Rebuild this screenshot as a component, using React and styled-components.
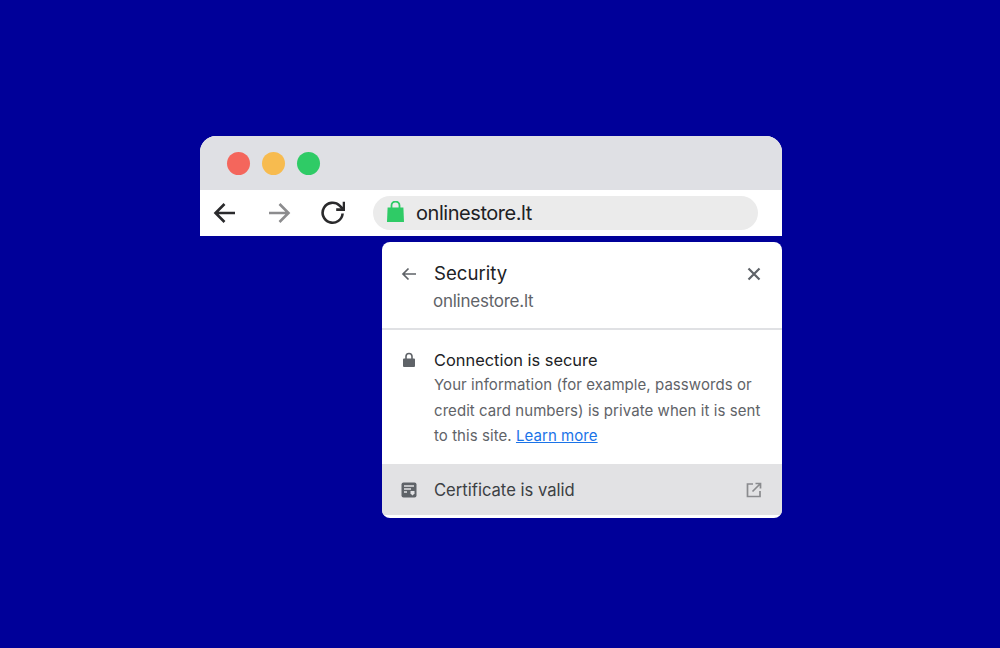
import React from "react";
import styled, { createGlobalStyle } from "styled-components";

const Global = createGlobalStyle`
  html, body { margin: 0; padding: 0; background: #000099; }
  body { font-family: Inter, "Liberation Sans", sans-serif; }
`;
const Page = styled.div`
  width: 1000px; height: 648px; box-sizing: border-box;
  padding: 136px 218px 0 200px; background: #000099; overflow: hidden;
`;
const Browser = styled.div`
  width: 582px; border-radius: 16px 16px 0 0; overflow: hidden; background: #fff;
`;
const TitleBar = styled.div`
  height: 54px; background: #dfe0e4; display: flex; align-items: center; gap: 12px; padding: 1px 0 0 27px; box-sizing: border-box;
`;
const Dot = styled.span`
  width: 23px; height: 23px; border-radius: 50%; background: ${p => p.$c};
`;
const Toolbar = styled.div`
  height: 46px; display: flex; align-items: center; padding-left: 13px;
`;
const NavIcon = styled.svg`
  width: 24px; height: 24px; margin-right: ${p => p.$mr}px; flex: none; display: block; fill: none;
  stroke: ${p => p.$c}; stroke-width: 2.6;
`;
const Omnibox = styled.div`
  width: 385px; height: 34px; margin-left: 28px; border-radius: 17px; background: #ebebeb;
  display: flex; align-items: center; gap: 12px; padding-left: 14px; box-sizing: border-box;
`;
const Bag = styled.svg`
  width: 17px; height: 21px; flex: none; display: block; margin-top: -3px;
`;
const Address = styled.span`
  font-size: 20px; letter-spacing: -0.45px; color: #202124; line-height: 34px;
`;
const Popup = styled.div`
  width: 400px; height: 276px; margin: 6px 0 0 182px; background: #fff; border-radius: 8px; overflow: hidden;
  padding-bottom: 3px; box-sizing: border-box; display: flex; flex-direction: column;
`;
const Header = styled.div`
  height: 88px; border-bottom: 2px solid #e0e1e4; box-sizing: border-box; padding: 19px 20px 0 19px;
  display: flex; align-items: flex-start;
`;
const Small = styled.svg`
  width: 16px; height: 16px; flex: none; display: block; margin-right: ${p => p.$mr ?? 17}px; margin-top: ${p => p.$mt ?? 0}px;
`;
const Titles = styled.div`
  flex: 1; display: flex; flex-direction: column;
`;
const Title = styled.div`
  font-size: 18.6px; line-height: 24px; color: #202124; font-weight: 400;
`;
const Sub = styled.div`
  font-size: 17px; line-height: 24px; letter-spacing: -0.25px; color: #5f6368; margin: 4px 0 0 -1px;
`;
const Body = styled.div`
  flex: 1; display: flex; padding: 19px 19px 0; box-sizing: border-box;
`;
const Head = styled.div`
  font-size: 16.4px; line-height: 22px; color: #202124;
`;
const Para = styled.div`
  font-size: 15px; letter-spacing: 0.06px; line-height: 25.5px; color: #5f6368; width: 332px; margin-top: 1px;
`;
const Link = styled.a`
  color: #1a73e8; text-decoration: underline;
`;
const CertRow = styled.div`
  height: 51px; background: #e2e2e4; display: flex; align-items: center; padding: 0 20px 0 19px;
`;
const CertText = styled.div`
  flex: 1; font-size: 16.6px; color: #3c4043;
`;

export default function App() {
  return (
    <Page>
      <Global />
      <Browser>
        <TitleBar>
          <Dot $c="#f4665c" /><Dot $c="#f7bb4f" /><Dot $c="#2fcb66" />
        </TitleBar>
        <Toolbar>
          <NavIcon viewBox="0 0 24 24" $c="#2a2a2c" $mr={30}><path d="M22 12H2.500M11.500 3 2.500 12l9 9" /></NavIcon>
          <NavIcon viewBox="0 0 24 24" $c="#8c8c8e" $mr={30}><path d="M2 12h19.500M12.500 3l9 9-9 9" /></NavIcon>
          <NavIcon viewBox="0 0 24 24" $c="#2a2a2c" $mr={0}><path d="M21.600 12.500A10 10 0 1 1 18.600 4.600L22 8" /><path d="M23 .8V8.600H15.200" /></NavIcon>
          <Omnibox>
            <Bag viewBox="0 0 17 21">
              <path d="M.6 6.500h15.800L17 21H0z" fill="#2fcb66" />
              <path d="M4.500 8V4.500a4 4 0 0 1 8 0V8" fill="none" stroke="#2fcb66" strokeWidth="1.800" />
            </Bag>
            <Address>onlinestore.lt</Address>
          </Omnibox>
        </Toolbar>
      </Browser>
      <Popup>
        <Header>
          <Small viewBox="0 0 16 16" $mt={5} $mr={17}><path d="M15 8H2M7.500 2.500 2 8l5.500 5.500" fill="none" stroke="#5f6368" strokeWidth="1.700" /></Small>
          <Titles>
            <Title>Security</Title>
            <Sub>onlinestore.lt</Sub>
          </Titles>
          <Small viewBox="0 0 16 16" $mt={5} $mr={0}><path d="M2.500 2.500l11 11M13.500 2.500l-11 11" fill="none" stroke="#5f6368" strokeWidth="2.200" /></Small>
        </Header>
        <Body>
          <Small viewBox="0 0 16 16" $mt={3}>
            <path d="M3 6.500h10a1 1 0 0 1 1 1v6.500a1 1 0 0 1-1 1H3a1 1 0 0 1-1-1V7.500a1 1 0 0 1 1-1z" fill="#5f6368" />
            <path d="M5 7V4.500a3 3 0 0 1 6 0V7" fill="none" stroke="#5f6368" strokeWidth="1.600" />
          </Small>
          <div>
            <Head>Connection is secure</Head>
            <Para>Your information (for example, passwords or credit card numbers) is private when it is sent to this site. <Link>Learn more</Link></Para>
          </div>
        </Body>
        <CertRow>
          <Small viewBox="0 0 16 16">
            <rect x="0.500" y="0.500" width="15" height="15" rx="2" fill="#5f6368" />
            <path d="M3 4h10M3 7h7M3 10h3" stroke="#e2e2e4" strokeWidth="1.300" />
            <path d="M9.500 9h4v2.500l-2 2-2-2z" fill="#e2e2e4" />
          </Small>
          <CertText>Certificate is valid</CertText>
          <Small viewBox="0 0 16 16" $mr={0}>
            <path d="M7 2H1.500v12.500H14V9" fill="none" stroke="#8a8b8e" strokeWidth="1.700" />
            <path d="M9.500 1.500h5v5M14.500 1.500 6.500 9.500" fill="none" stroke="#8a8b8e" strokeWidth="1.700" />
          </Small>
        </CertRow>
      </Popup>
    </Page>
  );
}
